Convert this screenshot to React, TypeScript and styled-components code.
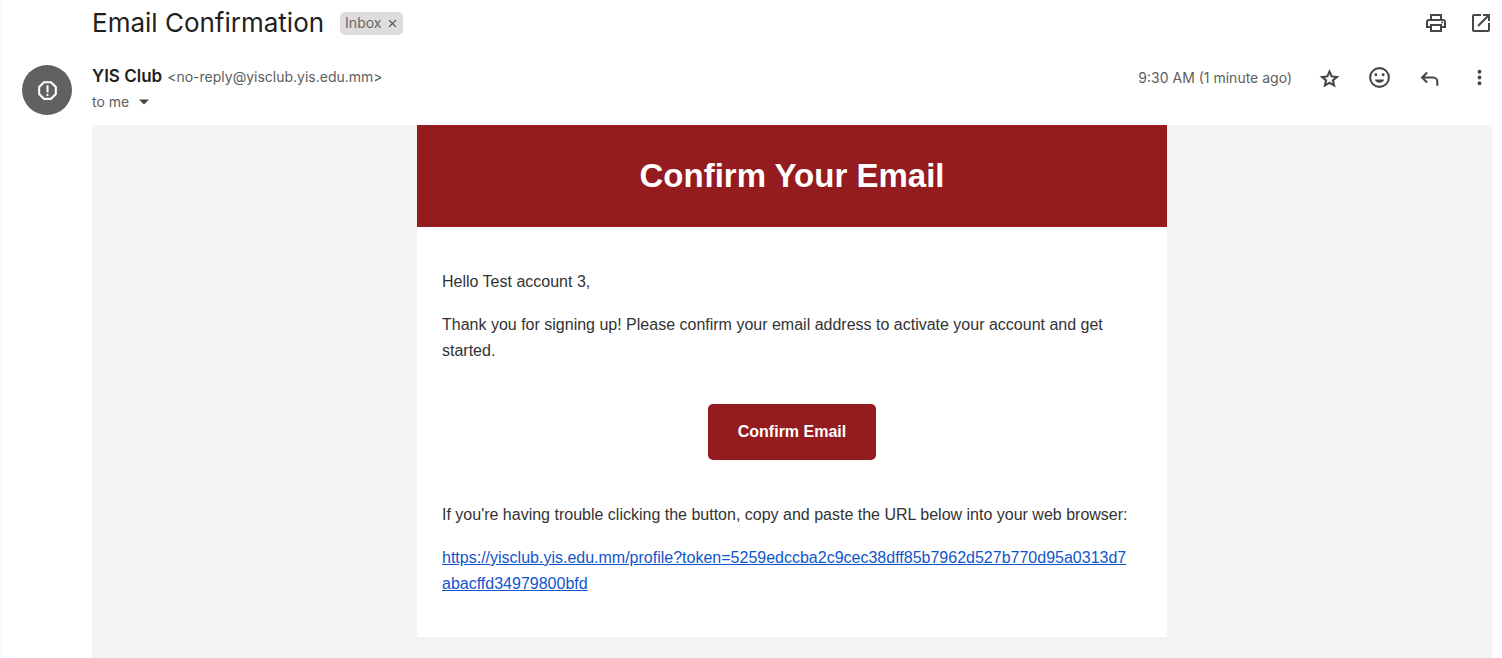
import React from 'react';
import styled, { createGlobalStyle } from 'styled-components';

const GlobalStyle = createGlobalStyle`
  * { box-sizing: border-box; }
  body {
    margin: 0;
    background: #fff;
    font-family: Inter, "Liberation Sans", sans-serif;
    color: #1f1f1f;
  }
  h1, h2, h3, p { margin: 0; }
`;

const Page = styled.main`
  display: flex;
  flex-direction: column;
  min-height: 100vh;
  padding-right: 10px;
  border-left: 2px solid #f6f8fc;
`;

const SubjectBar = styled.header`
  display: flex;
  align-items: center;
  justify-content: space-between;
  height: 46px;
  padding-left: 90px;
`;

const SubjectGroup = styled.div`
  display: flex;
  align-items: center;
  gap: 16px;
`;

const Subject = styled.h1`
  font-size: 26px;
  line-height: 36px;
  font-weight: 400;
`;

const Label = styled.span`
  display: flex;
  align-items: center;
  gap: 4px;
  height: 23px;
  padding: 0 4px 0 5px;
  border-radius: 5px;
  background: #ddd;
  color: #666;
  font-size: 14px;
  line-height: 20px;
`;

const IconButton = styled.button<{ $size?: number }>`
  display: flex;
  align-items: center;
  justify-content: center;
  width: ${({ $size = 25 }) => $size}px;
  height: ${({ $size = 25 }) => $size}px;
  padding: 0;
  border: 0;
  background: none;
  color: #444746;
  cursor: pointer;
`;

const SubjectActions = styled.div`
  display: flex;
  gap: 20px;
  margin-right: -1px;
`;

const Sender = styled.section`
  display: flex;
  height: 79px;
  padding: 18px 0 0 20px;
`;

const Avatar = styled.div`
  display: flex;
  flex: none;
  align-items: center;
  justify-content: center;
  width: 50px;
  height: 50px;
  margin: 1px 20px 0 0;
  border-radius: 50%;
  background: #616161;
  color: #fff;
`;

const SenderDetails = styled.div`
  flex: 1;
  min-width: 0;
  color: #5e5e5e;
  font-size: 14px;
  line-height: 25px;
`;

const SenderLine = styled.div`
  display: flex;
  align-items: baseline;
  gap: 5px;
  height: 25px;
`;

const SenderName = styled.h2`
  color: #1f1f1f;
  font-size: 17px;
  line-height: 25px;
  font-weight: 600;
`;

const Recipient = styled.div`
  display: flex;
  align-items: center;
  gap: 2px;
`;

const MessageActions = styled.div`
  display: flex;
  align-items: center;
  gap: 25px;
  height: 27px;
`;

const Time = styled.time`
  color: #5e5e5e;
  font-size: 14px;
  line-height: 25px;
`;

const MailCanvas = styled.section`
  flex: 1;
  margin-left: 90px;
  padding-bottom: 21px;
  background: #f3f3f3;
  color: #333;
  font-family: "Liberation Sans", Arial, sans-serif;
  font-size: 16px;
  line-height: 26px;
`;

const Card = styled.article`
  max-width: 750px;
  margin: 0 auto;
  background: #fff;
`;

const Banner = styled.div`
  padding: 25px;
  background: #941b1e;
  color: #fff;
  text-align: center;
`;

const BannerTitle = styled.h3`
  font-size: 33px;
  line-height: 52px;
  font-weight: 700;
`;

const CardBody = styled.div`
  display: flex;
  flex-direction: column;
  gap: 17px;
  padding: 42px 25px 40px;
`;

const ConfirmLink = styled.a`
  align-self: center;
  margin: 23px 0 25px;
  padding: 15px 30px;
  border-radius: 5px;
  background: #941b1e;
  color: #fff;
  font-weight: 700;
  text-decoration: none;
`;

const UrlLine = styled.p`
  padding-right: 10px;
  word-break: break-all;
`;

const TokenLink = styled.a`
  color: #15c;
`;

const Icon = ({ d, size = 25 }: { d: string; size?: number }) => (
  <svg width={size} height={size} viewBox="0 0 24 24" fill="currentColor" fillRule="evenodd" aria-hidden="true">
    <path d={d} />
  </svg>
);

const paths = {
  print:
    'M16 8V5H8v3H6V3h12v5h-2ZM18 12.500a1 1 0 1 0 0-2 1 1 0 0 0 0 2ZM16 19v-4H8v4h8Zm2 2H6v-4H2v-6a3 3 0 0 1 3-3h14a3 3 0 0 1 3 3v6h-4v4Zm2-6v-4a1 1 0 0 0-1-1H5a1 1 0 0 0-1 1v4h2v-2h12v2h2Z',
  open:
    'M5 21c-1.100 0-2-.9-2-2V5c0-1.100.9-2 2-2h7v2H5v14h14v-7h2v7c0 1.100-.9 2-2 2H5Zm4.700-5.300L8.300 14.300 17.600 5H14V3h7v7h-2V6.400l-9.300 9.300Z',
  star:
    'M21.500 10.700l-6.700-.6L12 3.900 9.200 10.100l-6.700.6 5.100 4.400L6.100 21.700 12 18.200l5.900 3.500-1.500-6.600 5.100-4.400ZM12 15.900l-2.900 1.750.77-3.300-2.560-2.220 3.380-.29L12 8.720l1.310 3.120 3.380.29-2.560 2.220.77 3.300L12 15.900Z',
  smile:
    'M12 2a10 10 0 1 0 0 20 10 10 0 0 0 0-20Zm0 18a8 8 0 1 1 0-16 8 8 0 0 1 0 16ZM8.500 10.800a1.400 1.400 0 1 0 0-2.800 1.400 1.400 0 0 0 0 2.800Zm7 0a1.400 1.400 0 1 0 0-2.800 1.400 1.400 0 0 0 0 2.800ZM7.500 14h9c-.7 2-2.400 3.100-4.500 3.100S8.200 16 7.500 14Z',
  reply:
    'M18.500 20v-4a3 3 0 0 0-3-3H7.300l3.100 3.100L9 17.500 3.500 12 9 6.500l1.400 1.400L7.300 11h8.200a5 5 0 0 1 5 5v4h-2Z',
  more:
    'M12 8a2 2 0 1 0 0-4 2 2 0 0 0 0 4Zm0 6a2 2 0 1 0 0-4 2 2 0 0 0 0 4Zm0 6a2 2 0 1 0 0-4 2 2 0 0 0 0 4Z',
  caret: 'M2 7h20L12 17Z',
  close: 'M19 6.400 17.600 5 12 10.600 6.400 5 5 6.400 10.600 12 5 17.600 6.400 19 12 13.400 17.600 19 19 17.600 13.400 12Z',
  report:
    'M15.730 3H8.270L3 8.270v7.460L8.270 21h7.460L21 15.730V8.270L15.730 3ZM19 14.900 14.900 19H9.100L5 14.900V9.100L9.100 5h5.800L19 9.100v5.800ZM11 7h2v7h-2ZM12 15.200a1.100 1.100 0 1 0 0 2.200 1.100 1.100 0 0 0 0-2.200Z',
};

const confirmUrl =
  'https://yisclub.yis.edu.mm/profile?token=5259edccba2c9cec38dff85b7962d527b770d95a0313d7abacffd34979800bfd';

export default function App() {
  return (
    <>
      <GlobalStyle />
      <Page>
        <SubjectBar>
          <SubjectGroup>
            <Subject>Email Confirmation</Subject>
            <Label>
              Inbox
              <IconButton $size={14} aria-label="Remove label Inbox">
                <Icon d={paths.close} size={13} />
              </IconButton>
            </Label>
          </SubjectGroup>
          <SubjectActions>
            <IconButton aria-label="Print all">
              <Icon d={paths.print} size={24} />
            </IconButton>
            <IconButton aria-label="Open in new window">
              <Icon d={paths.open} size={24} />
            </IconButton>
          </SubjectActions>
        </SubjectBar>

        <Sender>
          <Avatar>
            <Icon d={paths.report} />
          </Avatar>
          <SenderDetails>
            <SenderLine>
              <SenderName>YIS Club</SenderName>
              <span>&lt;no-reply@yisclub.yis.edu.mm&gt;</span>
            </SenderLine>
            <Recipient>
              to me
              <IconButton aria-label="Show details">
                <Icon d={paths.caret} size={12} />
              </IconButton>
            </Recipient>
          </SenderDetails>
          <MessageActions>
            <Time>9:30 AM (1 minute ago)</Time>
            <IconButton aria-label="Star">
              <Icon d={paths.star} />
            </IconButton>
            <IconButton aria-label="Add reaction">
              <Icon d={paths.smile} />
            </IconButton>
            <IconButton aria-label="Reply">
              <Icon d={paths.reply} />
            </IconButton>
            <IconButton aria-label="More">
              <Icon d={paths.more} size={23} />
            </IconButton>
          </MessageActions>
        </Sender>

        <MailCanvas>
          <Card>
            <Banner>
              <BannerTitle>Confirm Your Email</BannerTitle>
            </Banner>
            <CardBody>
              <p>Hello Test account 3,</p>
              <p>
                Thank you for signing up! Please confirm your email address to activate your account and get
                started.
              </p>
              <ConfirmLink href={confirmUrl}>Confirm Email</ConfirmLink>
              <p>If you're having trouble clicking the button, copy and paste the URL below into your web browser:</p>
              <UrlLine>
                <TokenLink href={confirmUrl}>{confirmUrl}</TokenLink>
              </UrlLine>
            </CardBody>
          </Card>
        </MailCanvas>
      </Page>
    </>
  );
}
